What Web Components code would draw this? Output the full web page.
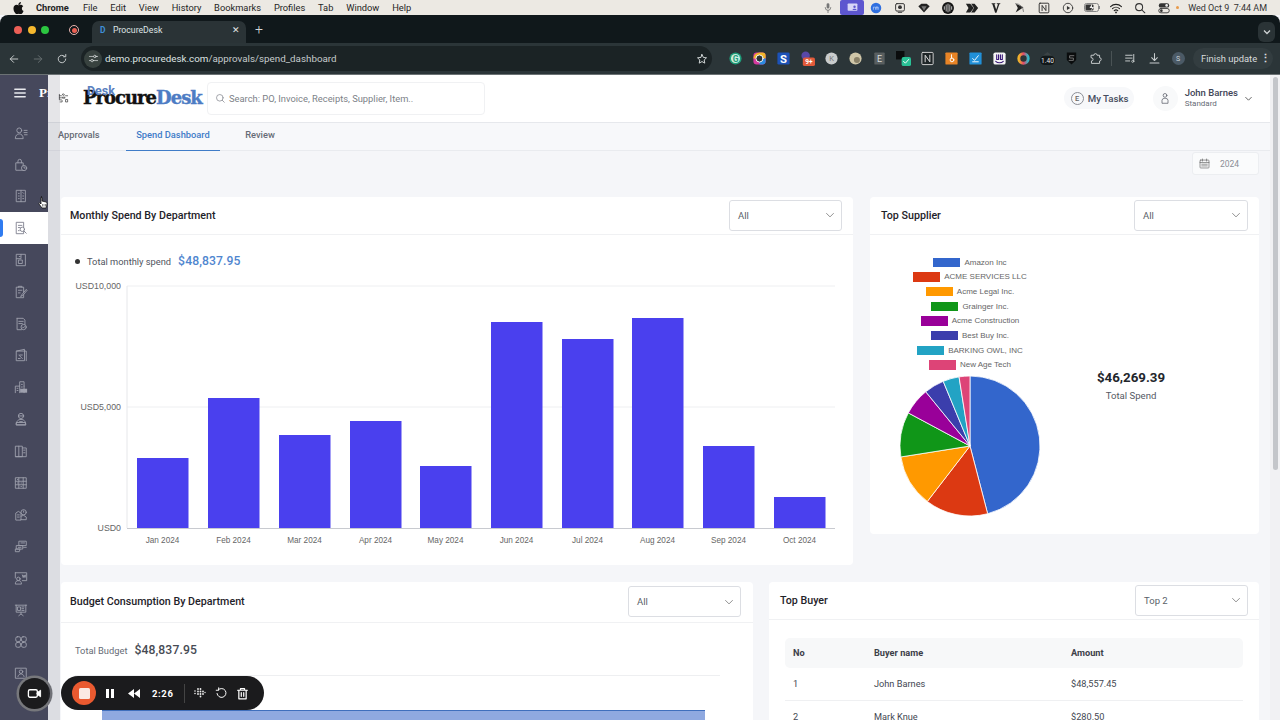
<!DOCTYPE html>
<html lang="en"><head><meta charset="utf-8"><title>ProcureDesk</title>
<style>
html,body{margin:0;height:720px;overflow:hidden;background:#f5f6f9;font-family:Roboto,"Liberation Sans",sans-serif}
page-frame{display:flex;flex-direction:column;width:1280px;height:720px}
</style></head><body>
<page-frame>
  <mac-menubar></mac-menubar>
  <browser-tabs></browser-tabs>
  <browser-toolbar></browser-toolbar>
  <app-shell>
    <app-sidebar></app-sidebar>
    <app-main>
      <app-header></app-header>
      <app-tabs></app-tabs>
      <date-filter></date-filter>
      <card-row gap="17">
        <dash-card w="792" h="368" head="38" pad="9">
          <span slot="title">Monthly Spend By Department</span>
          <dash-select slot="action" w="113">All</dash-select>
          <bar-chart></bar-chart>
        </dash-card>
        <dash-card w="389" h="337" head="38" pad="11">
          <span slot="title">Top Supplier</span>
          <dash-select slot="action" w="114">All</dash-select>
          <pie-chart></pie-chart>
        </dash-card>
      </card-row>
      <card-row gap="16" top="17">
        <dash-card w="692" h="300" head="41" pad="9" right="12">
          <span slot="title">Budget Consumption By Department</span>
          <dash-select slot="action" w="113">All</dash-select>
          <budget-chart></budget-chart>
        </dash-card>
        <dash-card w="490" h="300" head="38" pad="11">
          <span slot="title">Top Buyer</span>
          <dash-select slot="action" w="113">Top 2</dash-select>
          <buyer-table></buyer-table>
        </dash-card>
      </card-row>
    </app-main>
    <page-scrollbar></page-scrollbar>
    <recorder-bar></recorder-bar>
  </app-shell>
</page-frame>
<script>
const el=(name,html,extra)=>{customElements.define(name,class extends HTMLElement{
  constructor(){super();this.attachShadow({mode:'open'});this.shadowRoot.innerHTML=typeof html==='function'?html(this):html;}
  connectedCallback(){if(extra)extra(this,this.shadowRoot);}
});};
const svg=(s,inner,vb=16,attrs='')=>`<svg width="${s}" height="${s}" viewBox="0 0 ${vb} ${vb}" fill="none" stroke="currentColor" stroke-width="1" stroke-linecap="round" stroke-linejoin="round" ${attrs}>${inner}</svg>`;

/* ---------- macOS menu bar ---------- */
const menuTray=[
 [`<path d="M8 2.5a1.6 1.6 0 011.6 1.6v3a1.6 1.6 0 01-3.2 0v-3A1.6 1.6 0 018 2.5z" fill="#777" stroke="none"/><path d="M4.8 7.5a3.2 3.2 0 006.4 0M8 10.8v2.5" stroke="#777"/>`,'#777'],
 ['purple'],
 [`<circle cx="8" cy="8" r="6" fill="#2f6fe0" stroke="none"/><path d="M5 9.5V7h1.2M7.5 9.5V7h3v2.5M9 7v2.5" stroke="#dbe8ff" stroke-width=".7"/>`],
 [`<rect x="3" y="3" width="10" height="8.5" rx="1.5" stroke="#333" stroke-width="1.1"/><circle cx="8" cy="7" r="2.2" fill="#333" stroke="none"/><path d="M6 13h4" stroke="#333"/>`],
 [`<path d="M1.5 6L5 3h6l3.5 3L8 13z" fill="#222" stroke="none"/><path d="M5 6h6L8 11z" fill="#777" stroke="none"/>`],
 [`<circle cx="8" cy="8" r="6.8" fill="#111" stroke="none"/><path d="M3.8 6.5v3M5.9 4.5v7M8 3.5v9M10.1 4.5v7M12.2 6.5v3" stroke="#eee" stroke-width=".9"/>`],
 [`<path d="M1 3h5l4 5-4 5H1l3-5zM7 3h4l4 5-4 5H7l3.4-5z" fill="#222" stroke="none"/>`],
 [`<path d="M3 2.5h4.2v.8L6.2 3.6l2 6 2-6-1.3-.3v-.8h4v.8l-1.1.4L8.5 13.5H7L3.9 3.7 3 3.3z" fill="#222" stroke="none"/>`],
 [`<path d="M3 3l9 4-9 6 2.5-5z" fill="#222" stroke="none"/><path d="M3 3a9 9 0 019 9" stroke="#777"/>`],
 [`<rect x="2.5" y="2.5" width="11" height="11" rx="1" stroke="#222"/><path d="M5.8 11V5l4.4 6V5" stroke="#222"/>`],
 [`<circle cx="8" cy="8" r="5.4" stroke="#333"/><path d="M6.8 5.7L10.5 8l-3.7 2.3z" fill="#333" stroke="none"/>`],
 ['batt'],
 [`<path d="M1.8 6.4a9 9 0 0112.4 0M4 8.7a5.9 5.9 0 018 0M6 11a3 3 0 014 0" stroke="#222" stroke-width="1.3"/><circle cx="8" cy="13" r="1" fill="#222" stroke="none"/>`],
 [`<circle cx="7" cy="7" r="4" stroke="#333" stroke-width="1.2"/><path d="M10 10l3.5 3.5" stroke="#333" stroke-width="1.2"/>`],
 [`<rect x="2" y="2.5" width="12" height="5" rx="2.5" fill="#333" stroke="none"/><rect x="2" y="8.5" width="12" height="5" rx="2.5" stroke="#333"/><circle cx="11" cy="5" r="1.5" fill="#eee" stroke="none"/><circle cx="5" cy="11" r="1.5" fill="#333" stroke="none"/>`]
];
el('mac-menubar',()=>`<style>
:host{display:flex;align-items:center;height:15px;background:#ece9e3;color:#1f1f1f;font:400 9.3px Roboto,"Liberation Sans",sans-serif;flex:none}
.apple{width:11px;height:12px;margin-left:13px;margin-right:12px;flex:none}
b{font-weight:700;margin-right:14px}
.m{display:flex;gap:12.8px}
.tray{margin-left:auto;display:flex;align-items:center;height:15px}
.t{width:24px;display:flex;justify-content:center;align-items:center;flex:none;position:relative}
.p{width:24px;height:15px;background:#5d56cf;border-radius:2px;display:flex;align-items:center;justify-content:center}
.dot{width:3px;height:3px;border-radius:50%;background:#e89a4a;margin:0 9px 0 0}
.clock{margin-right:13px;font-size:9px;color:#333;white-space:pre}
</style>
<svg class="apple" viewBox="0 0 14 16"><path fill="#111" d="M10.2 0c.1 1-.3 2-.9 2.700-.6.8-1.600 1.300-2.500 1.200-.1-1 .4-2 .9-2.600C8.300.6 9.400 0 10.200 0zM13.300 5.500c-.1.100-1.800 1-1.800 3.100 0 2.400 2.100 3.300 2.200 3.300 0 .1-.3 1.200-1.100 2.300-.7 1-1.400 2-2.500 2s-1.400-.7-2.700-.7-1.700.7-2.700.7c-1.100 0-1.800-1-2.600-2.200C1 12.500.3 10.400.3 8.500c0-3.200 2-4.800 4-4.800 1.100 0 2 .7 2.700.7.600 0 1.700-.8 3-.8.500 0 2.200.1 3.300 1.900z"/></svg>
<b>Chrome</b><div class="m"><span>File</span><span>Edit</span><span>View</span><span>History</span><span>Bookmarks</span><span>Profiles</span><span>Tab</span><span>Window</span><span>Help</span></div>
<div class="tray">${menuTray.map(i=>{
 if(i[0]==='purple')return `<div class="t"><div class="p">${svg(13,'<rect x="2" y="3" width="12" height="9" rx="1" fill="#d8d6f7" stroke="none"/><circle cx="10.500" cy="7" r="1.500" fill="#5d56cf" stroke="none"/><path d="M8 11c0-2 5-2 5 0z" fill="#5d56cf" stroke="none"/>')}</div></div>`;
 if(i[0]==='batt')return `<div class="t"><svg width="17" height="9" viewBox="0 0 17 9"><rect x=".5" y=".5" width="14" height="8" rx="2" fill="none" stroke="#888"/><rect x="1.500" y="1.500" width="8" height="6" rx="1" fill="#333"/><path d="M15.500 3v3" stroke="#888"/><path d="M8 1L5.500 5H8L7 8l3-4H8z" fill="#eee"/></svg></div>`;
 return `<div class="t">${svg(14,i[0])}</div>`;}).join('')}<span class="dot"></span></div><span class="clock">Wed Oct 9  7:44 AM</span>`);

/* ---------- browser tab strip ---------- */
el('browser-tabs',`<style>
:host{display:flex;align-items:flex-end;height:28px;background:#10181b;border-radius:8px 8px 0 0;position:relative;flex:none;font:400 8.700px Roboto,sans-serif;color:#dfe3e4}
.lights{display:flex;gap:5.500px;align-items:center;align-self:flex-start;margin-top:11px;margin-left:14px;width:39px}
.lights i{width:8px;height:8px;border-radius:50%;flex:none}
.rec{width:10px;height:10px;border-radius:50%;border:1px solid #e7b5b0;box-sizing:border-box;display:flex;align-items:center;justify-content:center;align-self:flex-start;margin-top:10px;margin-left:16px}
.rec i{width:5px;height:5px;border-radius:50%;background:#ea5f52}
.tab{width:154px;height:22px;background:#2a3336;border-radius:7px 7px 0 0;margin-left:13px;display:flex;align-items:center;box-sizing:border-box;padding:0 6px 4px 8px}
.fav{color:#3f8fd6;font-weight:700;font-size:8.500px;width:13px}
.x{margin-left:auto;font-size:9px;color:#e3e6e7;line-height:1}
.plus{color:#d4d8d9;align-self:flex-start;margin-top:7px;margin-left:9px;font-size:14px;line-height:1;font-weight:300}
.menu{position:absolute;right:5px;top:7px;width:17px;height:20px;border-radius:6px;background:#2a3336;display:flex;align-items:center;justify-content:center;color:#cfd3d4}
</style>
<div class="lights"><i style="background:#ec5f56"></i><i style="background:#f5b82e"></i><i style="background:#2cc641"></i></div>
<span class="rec"><i></i></span>
<div class="tab"><span class="fav">D</span><span>ProcureDesk</span><span class="x">✕</span></div>
<span class="plus">+</span>
<span class="menu"><svg width="8" height="6" viewBox="0 0 8 6" fill="none" stroke="currentColor" stroke-width="1.300"><path d="M1 1.500l3 3 3-3"/></svg></span>`);

/* ---------- browser toolbar ---------- */
const ext=[
 `<circle cx="8" cy="8" r="6.500" fill="#1f9d7a"/><circle cx="8" cy="8" r="4.800" fill="#cdeee0"/><text x="8" y="11.200" font-size="9" font-family="Roboto" font-weight="700" fill="#1f9d7a" text-anchor="middle">G</text>`,
 `<rect x="1.500" y="1.500" width="13" height="13" rx="3.500" fill="#d63aa0"/><path d="M1.500 8A6.500 6.500 0 018 1.500h3A3.500 3.500 0 0114.500 5v3z" fill="#f0b52a"/><path d="M8 14.500h3a3.500 3.500 0 003.500-3.500V8H8z" fill="#2a8be0"/><circle cx="8" cy="8" r="3.800" fill="#2b3436" stroke="#fff"/>`,
 `<rect x="1.500" y="1.500" width="13" height="13" rx="1.500" fill="#1c52b8"/><text x="8" y="12.400" font-size="12" font-family="Roboto" font-weight="700" fill="#fff" text-anchor="middle">S</text>`,
 `<circle cx="6" cy="5" r="4.500" fill="#5848a8"/><rect x="3" y="7" width="13" height="9" rx="2" fill="#e25a3a"/><text x="9.500" y="14" font-size="7" font-family="Roboto" font-weight="700" fill="#fff" text-anchor="middle">9+</text>`,
 `<circle cx="8" cy="8" r="6.500" fill="#c9cccd"/><text x="8" y="11" font-size="8" font-family="Roboto" fill="#777" text-anchor="middle">K</text>`,
 `<circle cx="8" cy="8" r="6.500" fill="#cfc6a8"/><circle cx="9.500" cy="9.500" r="3.200" fill="#8a8168"/>`,
 `<rect x="2.500" y="1.500" width="11" height="13" rx="1" fill="#595f60"/><text x="8" y="11.800" font-size="9.500" font-family="Roboto" fill="#d9dcdc" text-anchor="middle">E</text>`,
 `<path d="M0 0h9v9H0z" fill="#0a0c0d"/><rect x="6" y="6.500" width="10" height="9.500" rx="2" fill="#29c196"/><path d="M8 11l2 2 3.500-4" stroke="#fff" fill="none"/>`,
 `<rect x="2" y="1.500" width="12" height="13" rx="1" fill="#1e2527" stroke="#d8d8d8"/><path d="M5.500 11.500v-7l5 7v-7" stroke="#e6e6e6" fill="none"/>`,
 `<rect x="1.500" y="1.500" width="13" height="13" rx="1" fill="#e88426"/><circle cx="8.500" cy="9.500" r="2" fill="none" stroke="#fff"/><path d="M8 7.500V4" stroke="#fff"/>`,
 `<rect x="1.500" y="1.500" width="13" height="13" rx="1" fill="#2190d8"/><path d="M5 8l2 2 4-5M5 11.500h6" stroke="#fff" fill="none"/>`,
 `<rect x="1.500" y="1.500" width="13" height="13" rx="2" fill="#f4f4f4"/><path d="M5 4v5h2V4M9 4v5h2V4M4 11c2 2 6 2 8 0" stroke="#3a1a78" stroke-width="1.200" fill="none"/>`,
 `<defs><linearGradient id="g"><stop stop-color="#f0b52a"/><stop offset=".5" stop-color="#e24a6a"/><stop offset="1" stop-color="#2fb8c8"/></linearGradient></defs><circle cx="8" cy="8" r="5" fill="none" stroke="url(#g)" stroke-width="3.200"/>`,
 `<path d="M8 1l5 4H3z" fill="#3b4345"/><rect x="0" y="5" width="16" height="10" rx="5" fill="#12181a"/><text x="8" y="12.600" font-size="7" font-family="Roboto" fill="#e6e8e8" text-anchor="middle">1.40</text>`,
 `<path d="M3 1.500h10v8l-5 5-5-5z" fill="#0a0c0d"/><path d="M10.500 5H6v2.500h4V10H5.500" stroke="#777" fill="none"/>`
];
el('browser-toolbar',()=>`<style>
:host{display:flex;align-items:center;height:31px;background:#2b3538;flex:none;color:#c7cccd;font:400 9.800px Roboto,sans-serif;border-bottom:1px solid #6b7274;box-sizing:content-box}
.nav{width:24px;display:flex;justify-content:center}
.addr{width:631px;height:25px;background:#1b2325;border-radius:13px;margin-left:7px;display:flex;align-items:center;box-sizing:border-box;padding:0 4px 0 3px;color:#dfe3e3}
.tune{width:18px;height:18px;border-radius:50%;background:#38423f;display:flex;align-items:center;justify-content:center;margin-right:3px}
.addr em{font-style:normal;color:#c6cbcc}
.star{margin-left:auto;margin-right:0;display:flex}
.exts{display:flex;margin-left:11px}
.exts span{width:24px;display:flex;justify-content:center;align-items:center}
.sep{width:1px;height:15px;background:#4a5355;margin:0 6px 0 4px}
.i{width:24px;display:flex;justify-content:center;align-items:center}
.av{width:13px;height:13px;border-radius:50%;background:#4b5a66;color:#cdd4d9;font-size:7px;display:flex;align-items:center;justify-content:center}
.upd{width:80px;height:21px;box-sizing:border-box;border-radius:11px;background:#333d40;margin-left:3px;display:flex;align-items:center;padding-left:8px;color:#d9dcdd;font-size:9.400px;white-space:nowrap}
.upd i{margin-left:3px;font-style:normal;font-weight:700;font-size:11px}
</style>
<span class="nav" style="margin-left:2px">${svg(12,'<path d="M13 8H3M7.500 3.500L3 8l4.500 4.500" stroke-width="1.300"/>')}</span>
<span class="nav" style="color:#687072">${svg(12,'<path d="M3 8h10M8.500 3.500L13 8l-4.500 4.500" stroke-width="1.300"/>')}</span>
<span class="nav">${svg(12,'<path d="M13 8a5 5 0 11-1.500-3.600M13 2v3h-3" stroke-width="1.300"/>')}</span>
<div class="addr"><span class="tune">${svg(11,'<path d="M2 5h6M12 5h2M2 11h2M8 11h6"/><circle cx="10" cy="5" r="1.800"/><circle cx="6" cy="11" r="1.800"/>')}</span><span>demo.procuredesk.com<em>/approvals/spend_dashboard</em></span><span class="star">${svg(12,'<path d="M8 2l1.800 3.900 4.200.5-3.100 2.900.8 4.200L8 11.400l-3.700 2.100.8-4.200L2 6.400l4.200-.5z" stroke-width="1.200"/>')}</span></div>
<div class="exts">${ext.map(e=>`<span>${svg(15,e,16,'style="stroke:none"')}</span>`).join('')}<span>${svg(13,'<path d="M3 4h3a2 2 0 014 0h3v3a2 2 0 010 4v3H3v-3a2 2 0 000-4z" stroke-width="1.200"/>')}</span></div>
<span class="sep"></span>
<span class="i">${svg(13,'<path d="M2 4h8M2 7.500h8M2 11h5" stroke-width="1.200"/><path d="M12 3v8" stroke-width="1.200"/><circle cx="10.800" cy="11.500" r="1.300"/>')}</span>
<span class="i">${svg(13,'<path d="M8 2v8M4.500 7L8 10.500 11.500 7M2.500 13.500h11" stroke-width="1.300"/>')}</span>
<span class="i"><span class="av">S</span></span>
<div class="upd">Finish update<i>⋮</i></div>`);

/* ---------- app shell ---------- */
el('app-shell',`<style>:host{display:flex;flex:1;min-height:0;position:relative;overflow:hidden;background:#f5f6f9}
.veil{position:absolute;left:48px;top:0;bottom:0;width:12px;background:rgba(68,70,90,.14);pointer-events:none}
.cursor{position:absolute;left:38px;top:121px}</style><slot></slot><div class="veil"></div>
<svg class="cursor" width="10" height="13" viewBox="0 0 10 13"><path d="M3 1c.8 0 1 .5 1 1v3l4 1c.8.200 1 .8 1 1.500L8.500 11 8 12H4L1 8c-.5-.7.300-1.500 1-1l1 1V2c0-.5 0-1 1-1z" fill="#fff" stroke="#111" stroke-width=".8"/><path d="M4.500 8v2.500M6 8v2.500M7.500 8v2.500" stroke="#111" stroke-width=".5"/></svg>`);

const sideIcons=[
 '<circle cx="6" cy="5" r="2.800"/><path d="M1.500 14c0-3 2-5 4.500-5s4.500 2 4.500 5zM11.500 5H15M11.500 7.500H15M12 10h3"/>',
 '<path d="M2.500 5.500h8v8.500h-8zM4.500 5.500V3.500a2 2 0 014 0v2"/><circle cx="11.500" cy="11.500" r="3" fill="#46485c"/><path d="M11.500 10v1.500h1.300"/>',
 '<rect x="3" y="1.500" width="10" height="13"/><path d="M8 1.500v13M5 5h1M5 8h1M5 11h1M10 4l1 1M10 8h1M10 11h1"/>',
 '<path d="M3 1.500h8v13H3zM5 5h4M5 7.500h2"/><circle cx="9.500" cy="9.500" r="2.500" fill="#fff"/><path d="M11.500 11.500l2.500 2.500M5 11h1"/>',
 '<rect x="3" y="1.500" width="10" height="13"/><path d="M8 1.500v5H3M13 1.500"/><rect x="5.500" y="8" width="4" height="4"/><path d="M6 4h1"/>',
 '<path d="M3 2.500h8v12H3zM5 2.500V1.500h4v1M5 6h4M5 9h2"/><path d="M9 11l5-6 1 1-5 6-2 1z" fill="#46485c"/>',
 '<path d="M3.500 1.500h7l2 2v5M3.500 1.500v13h5M5.500 5h5M5.500 7.500h4"/><circle cx="11" cy="11.500" r="3"/><path d="M9.700 11.500l1 1 1.600-1.700"/>',
 '<path d="M3 3.500L12 1.500v13H3zM3 3.500h11v11"/><path d="M5.500 8l4 4M9.500 8h-3M5 12h2"/>',
 '<path d="M1.500 14.500V7h5V2h5v5M11.500 7v7.500M6.500 7v7.500M8.500 5h1M8.500 8h1M3.500 9.500h1M3.500 12h1"/><rect x="7" y="10" width="8" height="4.500" fill="#9ea0ad" stroke="none"/>',
 '<circle cx="8" cy="4.500" r="3"/><path d="M2.500 14.500c0-4 2.200-6 5.500-6s5.500 2 5.500 6zM5 4.500h6M6.500 11h3"/><rect x="3" y="12" width="10" height="2.500"/>',
 '<path d="M2 2.500h7.500v12H2zM9.500 4.500h4.500v10H2M5.500 2.500v12M11 7h1.500M11 10h1.500"/>',
 '<path d="M2 2h12v12H2zM2 6h12M2 10h12M5.500 2v12M10.500 2v12M4 4h.5M4 8h.5M8 8h.5M8 12h.5"/>',
 '<path d="M2 14.500V7l3-2 3 2v7.500zM4 9h2M4 11.500h2"/><circle cx="11" cy="6" r="3"/><path d="M8 10.500l3-1 3 2v3h-6M11 4.500v1.500"/>',
 '<path d="M6 2.500h8v5H6zM8 4.500h4M3 7.500h7v4H3zM5 9.500h3M2 11.500h5l-1 3H2zM11 9.500h3"/>',
 '<path d="M1.500 2h13v9h-5M8 2"/><path d="M1.500 2v6"/><circle cx="5" cy="9" r="2"/><path d="M1.500 14.500c0-2.500 1.500-3.500 3.500-3.500s3.500 1 3.500 3.500zM9.500 4.500l1 3 1-3 1 3 1-3"/>',
 '<path d="M1.500 2.500h13M2.500 2.500v8h11v-8M8 10.500v2M5.500 14.500L8 12.500l2.500 2M4.500 4.500h3v4h-3zM9 4.500h2.500M9 6.500h2M9 8.500h2.500"/>',
 '<rect x="2" y="2" width="5.500" height="5.500" rx="1.800"/><rect x="8.500" y="2" width="5.500" height="5.500" rx="1.800"/><rect x="2" y="8.500" width="5.500" height="5.500" rx="1.800"/><rect x="8.500" y="8.500" width="5.500" height="5.500" rx="1.800"/>',
 '<rect x="2" y="2.500" width="12" height="11.500"/><circle cx="8" cy="6.500" r="2"/><path d="M4.500 12c.5-2 2-3 3.500-3s3 1 3.500 3"/>'
];
el('app-sidebar',()=>`<style>
:host{display:block;width:48px;flex:none;background:#46485c;color:#a0a2af;overflow:hidden}
.top{height:36px;display:flex;align-items:center;white-space:nowrap;box-sizing:border-box;padding-left:14px}
.top svg{flex:none}
.brand{font:700 13px "Liberation Serif",serif;color:#fff;margin-left:13px}
.list{display:flex;flex-direction:column;margin-top:6px}
.r{height:31.800px;display:flex;align-items:center;padding-left:14px;box-sizing:border-box;position:relative;flex:none}
.r.a{background:#fff;color:#7b7d8b}
.r.a::before{content:"";position:absolute;left:-1px;top:7px;bottom:7px;width:4px;border-radius:0 3px 3px 0;background:#2f7bf0}
</style>
<div class="top">${svg(12,'<path d="M1 3h14M1 8h14M1 13h14" stroke-width="1.700" stroke="#e8e9ee"/>')}<span class="brand">ProcureDesk</span></div>
<div class="list">${sideIcons.map((p,i)=>`<div class="r${i==3?' a':''}">${svg(14,p,16,'stroke-width=".9"')}</div>`).join('')}</div>`);

el('app-main',`<style>:host{display:flex;flex-direction:column;flex:1;min-width:0;background:#f5f6f9}</style><slot></slot>`);

el('app-header',()=>`<style>
:host{display:flex;align-items:center;height:46px;padding-bottom:1px;background:#fff;border-bottom:1px solid #e6e8ec;flex:none;padding-right:17px;box-sizing:content-box;font-family:Roboto,sans-serif}
.gear{margin-left:10px;color:#333;display:flex}
.logo{position:relative;margin-left:14px;font:900 18px "DejaVu Serif",serif;color:#111;letter-spacing:-.99px;white-space:nowrap;width:124px;line-height:20px;-webkit-text-stroke:.4px currentColor}
.logo b{color:#4d7cc4;font-weight:900}
.logo small{position:absolute;left:4px;top:-5px;font:700 12.500px Roboto,sans-serif;color:#5a7fc0;letter-spacing:0;-webkit-text-stroke:0}
.search{width:278px;height:33px;box-sizing:border-box;border:1px solid #f0f1f3;border-radius:4px;display:flex;align-items:center;padding-left:7px;color:#7c7f87;font-size:9.350px;gap:3px}
.tasks{margin-left:auto;width:70px;height:22px;border-radius:11px;background:#f7f8fa;display:flex;align-items:center;box-sizing:border-box;padding-left:7px;gap:4px;color:#464d5e;font-size:9.700px;font-weight:500}
.e{width:11px;height:11px;border:1px solid #8b8e96;border-radius:50%;color:#666;font-size:7.500px;display:flex;align-items:center;justify-content:center}
.circle{width:25px;height:25px;border-radius:50%;background:#f8f9fa;display:flex;align-items:center;justify-content:center;margin-left:19px;color:#5b5f6a}
.who{margin-left:7px;display:flex;flex-direction:column;line-height:11px}
.who b{font-weight:500;color:#3f4657;font-size:9.500px}
.who span{font-size:8px;color:#666b75}
.chev{margin-left:6px;color:#555;display:flex}
</style>
<span class="gear">${svg(11,'<path d="M2 4h3M2 7h3M2 2v8h3M8 1.500l1.500 1-1.500 1-1.500-1zM7 6l3 0v1.500h-3zM11 10v3h3v-3zM6 11v2H3"/><path d="M11 4h3"/>',16,'stroke-width="1.400"')}</span>
<span class="logo">Procure<b>Desk</b><small>Desk</small></span>
<div class="search">${svg(11,'<circle cx="7" cy="7" r="4.800"/><path d="M10.500 10.500l3 3"/>')}<span>Search: PO, Invoice, Receipts, Supplier, Item..</span></div>
<div class="tasks"><span class="e">E</span><span>My Tasks</span></div>
<div class="circle">${svg(12,'<circle cx="8" cy="4.500" r="2.500"/><path d="M4 14.500v-3.500a3 3 0 013-2.500h2a3 3 0 013 2.500v3.500z"/>')}</div>
<div class="who"><b>John Barnes</b><span>Standard</span></div>
<span class="chev">${svg(9,'<path d="M3 6l5 5 5-5" stroke-width="1.600"/>')}</span>`);

el('app-tabs',`<style>
:host{display:flex;align-items:stretch;height:27px;border-bottom:1px solid #e9ebef;background:#f7f8fa;flex:none;font:500 9.300px Roboto,sans-serif;color:#666b75;box-sizing:content-box;position:relative}
span{display:flex;align-items:center;box-sizing:border-box;padding-bottom:4px;justify-content:center}
.a{color:#3f7cc8;border-bottom:1.500px solid #3f7cc8;margin-bottom:-1px}
</style><span style="width:78px;padding-left:10px;justify-content:flex-start;">Approvals</span><span class="a" style="width:94px">Spend Dashboard</span><span style="width:80px">Review</span>`);

el('date-filter',()=>`<style>
:host{display:flex;justify-content:flex-end;height:46px;flex:none;padding-right:11px;box-sizing:border-box;align-items:flex-start;padding-top:1px;font:400 8.500px Roboto,sans-serif;color:#8b8e96}
.b{width:67px;height:23px;border:1px solid #eceef1;background:#fafbfc;border-radius:3px;box-sizing:border-box;display:flex;align-items:center;padding-left:6px;gap:10px}
</style><div class="b">${svg(11,'<rect x="1.500" y="3" width="13" height="11.500" rx="1"/><path d="M1.500 6.500h13M5 1.500v3M11 1.500v3M4 9h8M4 11.500h8"/>',16,'style="color:#666"')}<span>2024</span></div>`);

el('card-row',t=>`<style>:host{display:flex;align-items:flex-start;flex:none;padding-left:13px;gap:${t.getAttribute('gap')}px;margin-top:${t.getAttribute('top')||0}px}</style><slot></slot>`);

el('dash-card',t=>`<style>
:host{display:flex;flex-direction:column;flex:none;width:${t.getAttribute('w')}px;height:${t.getAttribute('h')}px;background:#fff;border-radius:4px;box-sizing:border-box;overflow:hidden;position:relative}
.h{height:${t.getAttribute('head')}px;flex:none;display:flex;align-items:center;justify-content:space-between;box-sizing:border-box;border-bottom:1px solid #f0f1f3;padding:0 ${t.getAttribute('right')||11}px 1px ${t.getAttribute('pad')}px}
.t{font:500 10.700px Roboto,sans-serif;color:#1e2229}
</style><div class="h"><span class="t"><slot name="title"></slot></span><slot name="action"></slot></div><slot></slot>`);

el('dash-select',t=>`<style>
:host{display:flex;align-items:center;justify-content:space-between;width:${t.getAttribute('w')}px;height:31px;box-sizing:border-box;border:1px solid #dcdee3;border-radius:3px;padding:0 6px 0 8px;font:400 9.500px Roboto,sans-serif;color:#5a5f69;background:#fff}
</style><slot></slot>${svg(10,'<path d="M2.500 5.500L8 11l5.500-5.500" stroke-width="1.300"/>',16,'style="color:#777"')}`);

/* ---------- bar chart ---------- */
const bars=[['Jan 2024',137,458],['Feb 2024',208,398],['Mar 2024',279,435],['Apr 2024',350,421],['May 2024',420,466],['Jun 2024',491,322],['Jul 2024',562,339],['Aug 2024',632,318],['Sep 2024',703,446],['Oct 2024',774,497]];
el('bar-chart',()=>`<style>
:host{display:block;font:400 10px Roboto,sans-serif}
.sum{display:flex;align-items:center;height:20px;margin:16px 0 0 14px;color:#50545e;font-size:9.300px}
.sum i{width:5px;height:5px;border-radius:50%;background:#333;margin-right:7px}
.sum b{font-weight:500;color:#4f86cf;font-size:12.200px;margin-left:7px;letter-spacing:.1px}
svg{display:block;margin-top:9px}
text{font:400 8.800px "Liberation Sans",sans-serif;fill:#666}
text.m{font-size:8.200px}
</style><div class="sum"><i></i><span>Total monthly spend</span><b>$48,837.95</b></div>
<svg width="792" height="270" viewBox="61 280 792 270">
<path d="M127 286H835M127 407H835" stroke="#eeeff1"/><path d="M127 286V528" stroke="#e6e7ea"/><path d="M127 528.500H835" stroke="#c8cad0"/>
${bars.map(b=>`<rect x="${b[1]}" y="${b[2]}" width="51.500" height="${528-b[2]}" fill="#4a40ee"/><text class="m" x="${b[1]+25.500}" y="543" text-anchor="middle">${b[0]}</text>`).join('')}
<text x="121" y="289" text-anchor="end">USD10,000</text><text x="121" y="410" text-anchor="end">USD5,000</text><text x="121" y="531" text-anchor="end">USD0</text>
</svg>`);

/* ---------- pie chart ---------- */
const sup=[['Amazon Inc','#3366cc',165.4],['ACME SERVICES LLC','#dc3912',217.6],['Acme Legal Inc.','#ff9900',261],['Grainger Inc.','#109618',298.2],['Acme Construction','#990099',320.8],['Best Buy Inc.','#3b3eac',337.5],['BARKING OWL, INC','#22a3c4',351],['New Age Tech','#dd4477',359.99]];
const pt=a=>{const r=a*Math.PI/180;return (70+70*Math.sin(r)).toFixed(2)+' '+(70-70*Math.cos(r)).toFixed(2);};
el('pie-chart',()=>{let from=0;return `<style>
:host{display:grid;grid-template-columns:198px 124px;padding-left:1px;font-family:Roboto,sans-serif}
.l{display:flex;flex-direction:column;align-items:center;padding-top:20px}
.row{display:flex;align-items:center;height:14.670px;gap:4px;font:400 8px "Liberation Sans",sans-serif;color:#666;white-space:nowrap;flex:none}
.row i{width:27px;height:9.500px;flex:none}
svg{display:block;margin-top:4px}
.tot{display:flex;flex-direction:column;align-items:center;padding-top:133px;white-space:nowrap}
.tot b{font-weight:700;font-size:13.300px;color:#23262c;line-height:20px}
.tot span{font-size:9.600px;color:#555a64;line-height:16px}
</style><div class="l">${sup.map(s=>`<div class="row"><i style="background:${s[1]}"></i><span>${s[0]}</span></div>`).join('')}
<svg width="140" height="140" viewBox="0 0 140 140">${sup.map(s=>{const d=`M70 70L${pt(from)}A70 70 0 0 1 ${pt(s[2])}Z`;from=s[2];return `<path d="${d}" fill="${s[1]}" stroke="#fff" stroke-width=".8"/>`;}).join('')}</svg></div>
<div class="tot"><b>$46,269.39</b><span>Total Spend</span></div>`;});

el('budget-chart',`<style>
:host{display:block;font-family:Roboto,sans-serif}
.sum{display:flex;align-items:center;height:20px;margin:17px 0 0 14px;color:#666b75;font-size:9.300px}
.sum b{font-weight:500;color:#474b54;font-size:12.200px;margin-left:7px;letter-spacing:.1px}
.line{height:1px;background:#eeeff1;margin:15px 33px 0 14px}
.bar{height:14px;background:#8fa9e0;border-top:1px solid #3f6fbd;margin:34px 48px 0 41px}
</style><div class="sum"><span>Total Budget</span><b>$48,837.95</b></div><div class="line"></div><div class="bar"></div>`);

el('buyer-table',`<style>
:host{display:block;padding:18px 16px 0;font:400 9.200px Roboto,sans-serif;color:#444852}
.g{display:grid;grid-template-columns:81px 197px 1fr;align-items:center;padding-left:8px}
.head{height:30px;background:#f7f8f9;border-radius:5px;font-weight:700;color:#3d4049;padding-bottom:1px;box-sizing:border-box}
.row{height:33px;border-bottom:1px solid #eff0f2;padding-bottom:1px;box-sizing:border-box}
</style><div class="g head"><span>No</span><span>Buyer name</span><span>Amount</span></div>
<div class="g row"><span>1</span><span>John Barnes</span><span>$48,557.45</span></div>
<div class="g row"><span>2</span><span>Mark Knue</span><span>$280.50</span></div>`);

el('page-scrollbar',`<style>:host{display:block;width:10px;flex:none;background:#f1f1f3;position:relative}
i{position:absolute;left:3px;right:2px;top:2px;height:393px;border-radius:3px;background:#c4c6ca}</style><i></i>`);

el('recorder-bar',()=>`<style>
:host{position:absolute;left:16px;top:600px;display:flex;align-items:center;color:#fff;font:500 9.500px Roboto,sans-serif}
.cam{width:31px;height:31px;border-radius:50%;background:#1b1b1d;box-shadow:0 0 0 2.500px #77787c;display:flex;align-items:center;justify-content:center;margin:2.500px}
.pill{display:flex;align-items:center;margin-left:9px;width:203px;height:34px;background:#1b1b1d;border-radius:17px;box-sizing:border-box;padding-left:11px}
.stop{width:24px;height:24px;border-radius:50%;background:#ea5a30;display:flex;align-items:center;justify-content:center}
.stop i{width:11px;height:11px;border-radius:1.500px;background:#fbe9e2}
.i{display:flex;justify-content:center;width:24px}
.time{letter-spacing:.6px;margin-left:6px;width:28px;font-weight:700}
.div{width:1px;height:19px;background:#444;margin:0 4px}
</style>
<div class="cam">${svg(15,'<rect x="1.500" y="4" width="9.500" height="8" rx="1.500" stroke-width="1.400"/><path d="M11 7l3.500-2.500v7L11 9z" fill="#fff" stroke-width="1"/>')}</div>
<div class="pill"><span class="stop"><i></i></span>
<span class="i" style="margin-left:2px"><svg width="10" height="11" viewBox="0 0 10 11"><path d="M1 1h3v9H1zM6 1h3v9H6z" fill="#fff"/></svg></span>
<span class="i"><svg width="12" height="9" viewBox="0 0 12 9"><path d="M6 0v9L0 4.500zM12 0v9L6 4.500z" fill="#fff"/></svg></span>
<span class="time">2:26</span><span class="div"></span>
<span class="i" style="margin-left:-1px"><svg width="12" height="12" viewBox="0 0 12 12" fill="#eee"><circle cx="1" cy="4" r=".8"/><circle cx="1" cy="6.500" r=".8"/><circle cx="4" cy="2" r=".9"/><circle cx="4" cy="4.500" r=".9"/><circle cx="4" cy="7" r=".9"/><circle cx="6.500" cy="2" r=".9"/><circle cx="6.500" cy="4.500" r=".9"/><circle cx="6.500" cy="7" r=".9"/><circle cx="6.500" cy="9.500" r=".9"/><circle cx="9" cy="4.500" r=".9"/><circle cx="9" cy="7" r=".9"/><circle cx="11" cy="5.500" r=".7"/></svg></span>
<span class="i" style="margin-left:-3px">${svg(13,'<path d="M4 3.500a5.500 5.500 0 11-1.500 4.500M4.500 1v3h-3" stroke-width="1.200"/>')}</span>
<span class="i" style="margin-left:-3px">${svg(13,'<path d="M2 4h12M5.500 4V2h5v2M3.500 4v10.500h9V4M6.500 7v4.500M9.500 7v4.500" stroke-width="1.500"/>')}</span></div>`);
</script>
</body></html>
